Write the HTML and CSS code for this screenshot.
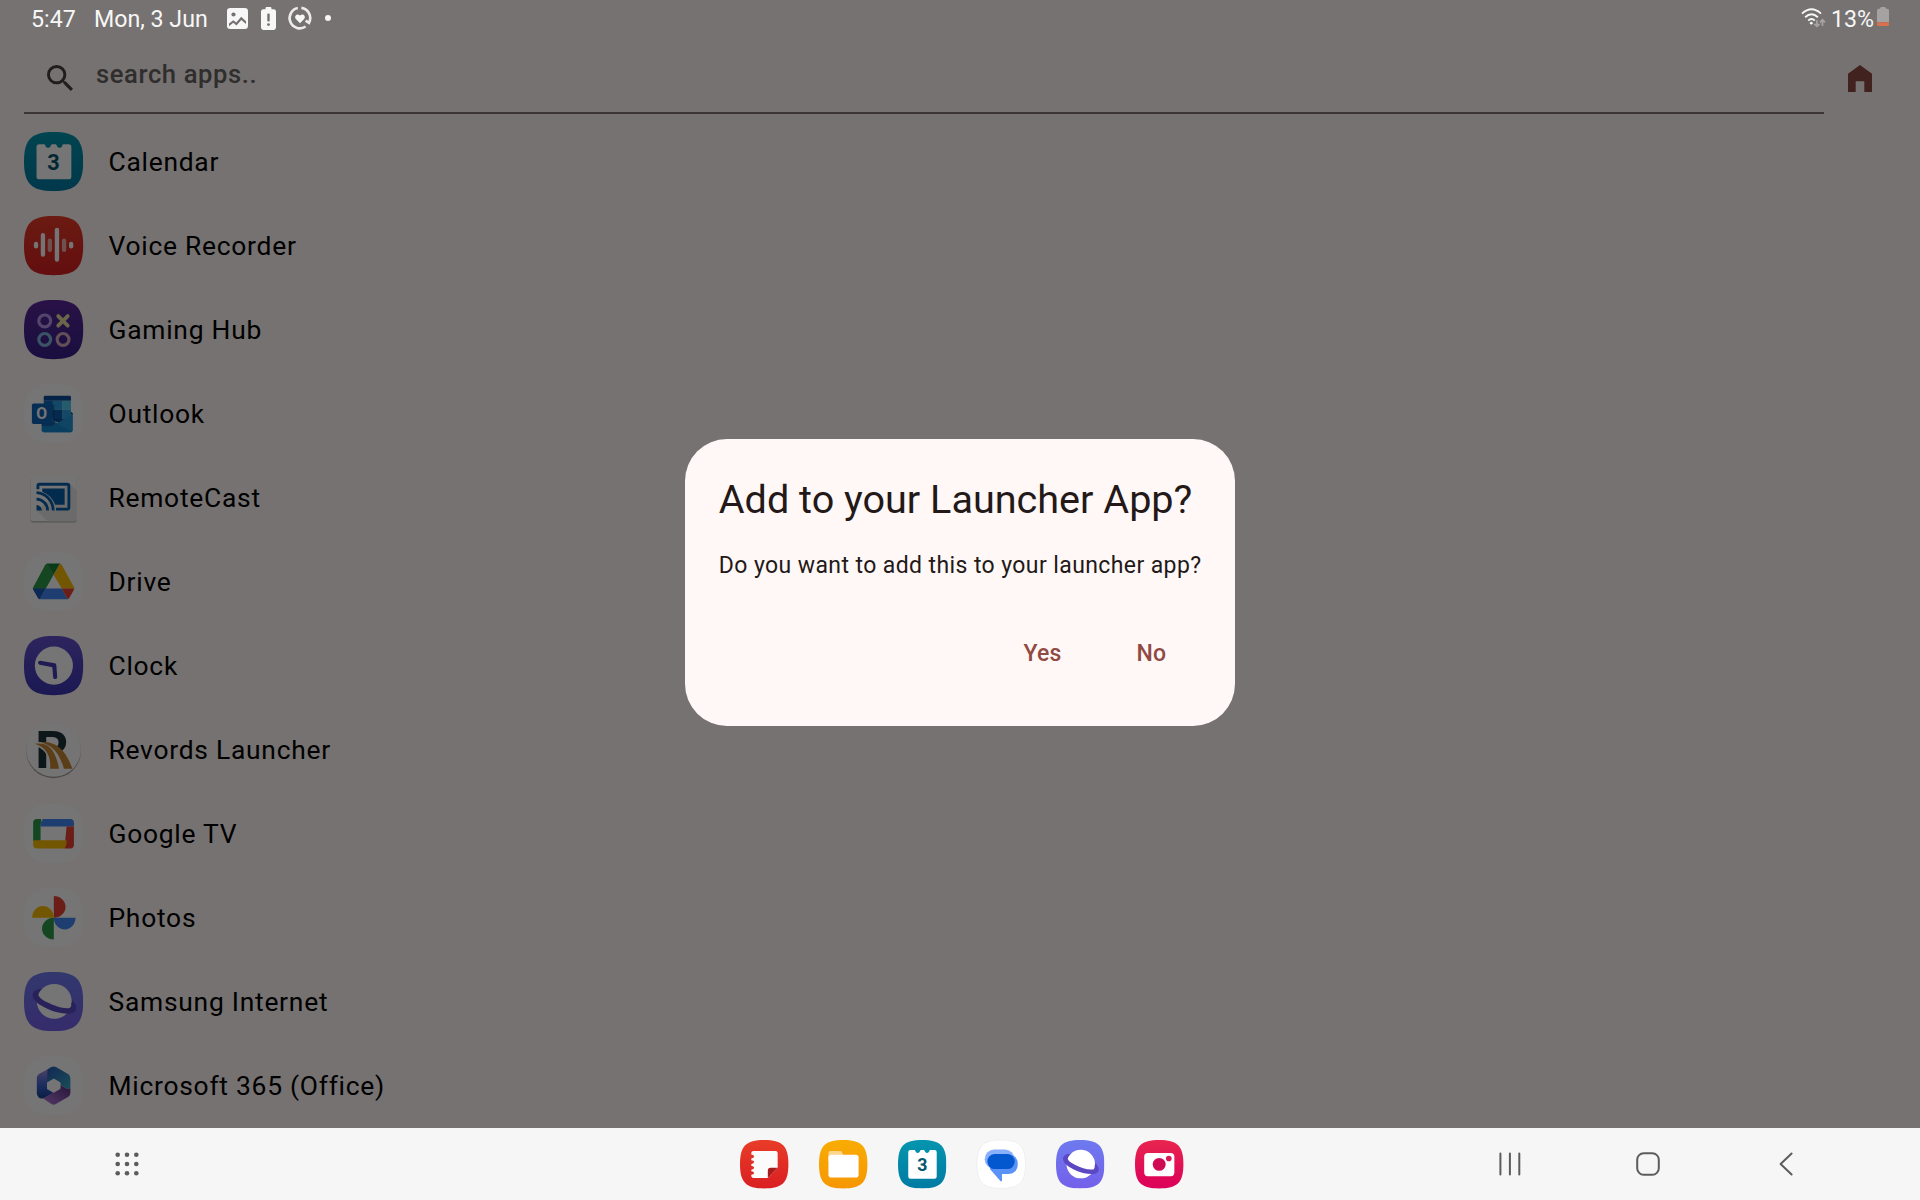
FILE: index.html
```html
<!DOCTYPE html>
<html lang="en">
<head>
<meta charset="utf-8">
<title>Launcher</title>
<link rel="stylesheet" href="styles.css">
</head>
<body>
<svg class="defs" width="0" height="0" aria-hidden="true">
  <defs>
    <linearGradient id="g-teal" x1="0" y1="0" x2="0" y2="1"><stop offset="0" stop-color="#0595ae"/><stop offset="1" stop-color="#007ba3"/></linearGradient>
    <linearGradient id="g-red" x1="0" y1="0" x2="0" y2="1"><stop offset="0" stop-color="#e83c28"/><stop offset="1" stop-color="#da1f22"/></linearGradient>
    <linearGradient id="g-purple" x1="0" y1="0" x2="0" y2="1"><stop offset="0" stop-color="#5a2699"/><stop offset="1" stop-color="#37208a"/></linearGradient>
    <linearGradient id="g-indigo" x1="0" y1="0" x2="0" y2="1"><stop offset="0" stop-color="#6450cc"/><stop offset="1" stop-color="#3a35b4"/></linearGradient>
    <linearGradient id="g-net" x1="0" y1="0" x2="0" y2="1"><stop offset="0" stop-color="#6e7aef"/><stop offset="1" stop-color="#7460ea"/></linearGradient>
    <linearGradient id="g-orange" x1="0" y1="0" x2="0" y2="1"><stop offset="0" stop-color="#f8ac03"/><stop offset="1" stop-color="#f69704"/></linearGradient>
    <linearGradient id="g-pink" x1="0" y1="0" x2="0" y2="1"><stop offset="0" stop-color="#e8254e"/><stop offset="1" stop-color="#dc005a"/></linearGradient>
    <linearGradient id="g-road" x1="0" y1="0" x2="1" y2="1"><stop offset="0" stop-color="#c98a3c"/><stop offset="1" stop-color="#c5842f"/></linearGradient>
    <linearGradient id="g-m1" x1="0" y1="0" x2="1" y2="1"><stop offset="0" stop-color="#2757b8"/><stop offset="1" stop-color="#3aa9c0"/></linearGradient>
    <linearGradient id="g-m2" x1="0" y1="0" x2="0" y2="1"><stop offset="0" stop-color="#a58be0"/><stop offset=".5" stop-color="#3f67d0"/><stop offset="1" stop-color="#173f94"/></linearGradient>
    <linearGradient id="g-m3" x1="0" y1="1" x2="1" y2="0"><stop offset="0" stop-color="#b77ce0"/><stop offset="1" stop-color="#57307f"/></linearGradient>
    <path id="squircle" d="M30 0C52.5 0 60 7.5 60 30S52.5 60 30 60 0 52.5 0 30 7.5 0 30 0Z"/>
    <symbol id="i-calendar" viewBox="0 0 60 60">
      <use href="#squircle" fill="url(#g-teal)"/>
      <path fill="#fff" d="M15.5 12.3H20.7C21.6 12.3 21.6 16 24.5 16S27.2 12.3 28.3 12.3H32.2C33.2 12.3 33.2 16 36.1 16S38.8 12.3 39.7 12.3H45.3Q48 12.3 48 15V45.3Q48 48 45.3 48H15.5Q12.7 48 12.7 45.3V15Q12.7 12.3 15.5 12.3Z"/>
      <text class="icon-day" x="30.3" y="38.3" text-anchor="middle">3</text>
    </symbol>
    <symbol id="i-internet" viewBox="0 0 60 60">
      <use href="#squircle" fill="url(#g-net)"/>
      <ellipse cx="30.7" cy="29.3" rx="23" ry="10" transform="rotate(20 30.7 29.3)" fill="#5b48c2"/>
      <circle cx="30.7" cy="29.8" r="17.7" fill="#fff"/>
      <path fill="#5b48c2" d="M9 22C8 27 13 32 22 36.5 32 41.5 44 43.5 49.5 41.5 52.5 40.3 53.4 37.5 52.5 34L47.8 31C48.8 34 48.3 36 46 36.5 40 37.5 31 34.5 24 31 18 28 14 25 14.5 22Z"/>
    </symbol>
  </defs>
</svg>

<div class="screen">
  <header class="status">
    <div class="status-side">
      <span class="time">5:47</span>
      <span class="date">Mon, 3 Jun</span>
      <svg class="s-image" viewBox="0 0 21 21"><rect width="21" height="21" rx="3.2" fill="#f7f7f7"/><circle cx="6.5" cy="6.5" r="2.1" fill="#757170"/><path fill="#757170" d="M2 15.6L6.3 12.2 9.3 14.4 14.2 8.8 19 13.2V16L14.3 12 9.5 17.6 6.3 14.8 2 18.2Z"/></svg>
      <svg class="s-batt" viewBox="0 0 15 23"><path fill="#f7f7f7" d="M4.5 2.2V1.2Q4.5 0 5.7 0H9.3Q10.5 0 10.5 1.2V2.2H12.6Q15 2.2 15 4.6V20.6Q15 23 12.6 23H2.4Q0 23 0 20.6V4.6Q0 2.2 2.4 2.2Z"/><rect x="6.3" y="6.5" width="2.4" height="8" rx="1" fill="#757170"/><circle cx="7.5" cy="17.6" r="1.4" fill="#757170"/></svg>
      <svg class="s-heart" viewBox="0 0 24 24" fill="none" stroke="#eceaea" stroke-width="2.6"><path d="M9.8 2.1A10.2 10.2 0 1 0 17.6 20.5"/><path d="M13.4 1.9A10.2 10.2 0 0 1 21 16.8L17.6 14.6"/><path fill="#f7f7f7" stroke="none" d="M12 17.3L7.9 13.1C5.6 10.4 9 6.6 12 9.6 15 6.6 18.4 10.4 16.1 13.1Z"/></svg>
      <span class="s-dot"></span>
    </div>
    <div class="status-side">
      <svg class="s-wifi" viewBox="0 0 26 20" fill="none" stroke="#f7f7f7" stroke-width="1.9"><path d="M1 5.6Q10.5-3 20 5.6"/><path d="M4.1 9.2Q10.5 3.4 16.9 9.2"/><path d="M7.2 12.6Q10.5 9.6 13.8 12.6"/><circle cx="10.3" cy="15.2" r="1.4" fill="#f7f7f7" stroke="none"/><path stroke="#a7a4a3" stroke-width="1.7" d="M15.9 12.3V18.2M13.3 15.8L15.9 18.4 18.5 15.8M21.5 18V12M19 14.3L21.5 11.8 24 14.3"/></svg>
      <span class="percent">13%</span>
      <svg class="s-level" viewBox="0 0 12 19"><path fill="#a5a3a2" d="M3 1.7Q3 0 4.5 0H7.5Q9 0 9 1.7H10.4Q12 1.7 12 3.4V15H0V3.4Q0 1.7 1.6 1.7Z"/><path fill="#d9714f" d="M0 15.2H12V17.4Q12 19 10.4 19H1.6Q0 19 0 17.4Z"/></svg>
    </div>
  </header>

  <main class="app">
    <div class="search-row">
      <div class="search-field">
        <svg class="search-icon" viewBox="3 3 17.5 17.5"><path fill="#4a3f3d" d="M15.5 14h-.79l-.28-.27A6.471 6.471 0 0 0 16 9.5 6.5 6.5 0 1 0 9.5 16c1.61 0 3.09-.59 4.23-1.57l.27.28v.79l5 4.99L20.49 19l-4.99-5zm-6 0C7.01 14 5 11.99 5 9.5S7.01 5 9.5 5 14 7.01 14 9.5 11.99 14 9.5 14z"/></svg>
        <span class="placeholder">search apps..</span>
      </div>
      <svg class="home-icon" viewBox="0 0 24 27"><path fill="#904a43" d="M12 0L24 8.8V27H16.3V16.3H7.7V27H0V8.8Z"/></svg>
    </div>
    <ul class="apps">
      <li><svg class="icon"><use href="#i-calendar"/></svg><span>Calendar</span></li>
      <li><svg class="icon" viewBox="0 0 60 60"><use href="#squircle" fill="url(#g-red)"/><g stroke="#fff" stroke-width="4.4" stroke-linecap="round"><path d="M12.2 28.3V30.7M19.2 19.4V39M33.4 14V44.2M47.8 28.3V30.7"/><path stroke-opacity=".62" d="M26.2 25V34.2M40.6 25V34.2"/></g></svg><span>Voice Recorder</span></li>
      <li><svg class="icon" viewBox="0 0 60 60"><use href="#squircle" fill="url(#g-purple)"/><g fill="none" stroke-width="3.2"><circle cx="21" cy="21.2" r="6" stroke="#b39aee"/><path d="M34.7 16.3L44.3 26M44.3 16.3L34.7 26" stroke="#e6dfa2" stroke-width="3.8" stroke-linecap="round"/><circle cx="21" cy="40" r="6" stroke="#7fb6dc"/><circle cx="39.6" cy="40" r="6" stroke="#d8adc0"/></g></svg><span>Gaming Hub</span></li>
      <li><svg class="icon" viewBox="0 0 60 60"><use href="#squircle" fill="#fff"/><path fill="#0a4d9c" d="M21.5 12H46Q47.6 12 47.6 13.5V17H20V13.5Q20 12 21.5 12Z"/><path fill="#0f6cbd" d="M20 17H29.3V35H20Z"/><path fill="#2ba0df" d="M29.3 17H38.6V26H29.3Z"/><path fill="#50c8ee" d="M38.6 17H47.6V26H38.6Z"/><path fill="#0b5cab" d="M29.3 26H38.6V38H29.3Z"/><path fill="#2ba0df" d="M38.6 26H47.6V38H38.6Z"/><path fill="#0a3768" d="M47.6 28.5L49.5 29.6V31H47.6Z"/><path fill="#0a4d9c" d="M29 35.5H40.5L35 39.5Z"/><path fill="#2196d6" d="M49.5 30.3V47Q49.5 48.8 47.7 48.8H20Q18 48.8 18 47V32L34 39.5Z"/><path fill="#1688cd" d="M18 33L48.8 48.2Q48 48.8 47.3 48.8H20Q18 48.8 18 47Z"/><path fill="#083b75" opacity=".45" d="M20 21H31V40Q31 42.5 28.5 42.5H18V40Z"/><rect x="8" y="19.8" width="20.8" height="20.8" rx="1.8" fill="#0f62b5"/><text class="icon-o" x="18.3" y="35.9" text-anchor="middle">O</text></svg><span>Outlook</span></li>
      <li><svg class="icon" viewBox="0 0 60 60"><rect x="6.6" y="8.6" width="47" height="46.6" rx="3" fill="#b9b3b2"/><rect x="6.6" y="7.3" width="47" height="46.6" rx="2.6" fill="#fcfcfc"/><path fill="#eceaea" d="M13 43L24 54H51Q53.6 54 53.6 51.3V23L46 15.5Z"/><path fill="none" stroke="#075fa8" stroke-width="2.9" d="M14.1 21.5V18.2Q14.1 16.5 15.8 16.5H43.8Q45.5 16.5 45.5 18.2V40Q45.5 41.7 43.8 41.7H32.5"/><path fill="#075fa8" d="M18.5 20.9H41.2V37.3H31.6A23 23 0 0 0 18.5 24ZM12.7 37.6A5.4 5.4 0 0 1 18.1 43H12.7Z"/><path fill="none" stroke="#075fa8" stroke-width="2.8" d="M12.7 25A18 18 0 0 1 29.6 43M12.7 31.5A11.5 11.5 0 0 1 23.9 43"/></svg><span>RemoteCast</span></li>
      <li><svg class="icon" viewBox="0 0 60 60"><use href="#squircle" fill="#fff"/><path fill="#2b9a48" d="M24 11.7L30 23 16 48 9 37Q9 36.5 9.4 35.7L21.3 13.5Q22.3 11.7 24 11.7Z"/><path fill="#15803a" d="M23.5 11.7H36.5L30 23Z"/><path fill="#fbbc04" d="M36.5 11.7Q37.8 12.2 38.5 13.5L50.7 35.7 51 37H38.3L30 23Z"/><path fill="#1c57b9" d="M9 37H21.7L15.9 48Q14.7 47.5 13.8 46L9.5 38.4Z"/><path fill="#4285f4" d="M21.7 37H38.3L44.2 48H17Q16.3 48 15.9 47.8Z"/><path fill="#ea4335" d="M38.3 37H51Q50.8 37.9 50.4 38.6L46.2 46Q45.3 47.5 44.2 48Z"/></svg><span>Drive</span></li>
      <li><svg class="icon" viewBox="0 0 60 60"><use href="#squircle" fill="url(#g-indigo)"/><circle cx="30.3" cy="30" r="19.3" fill="#fff"/><path d="M16.3 27.1L30.7 29.8 31.6 41.6" fill="none" stroke="#453db5" stroke-width="4.2" stroke-linecap="round" stroke-linejoin="round"/></svg><span>Clock</span></li>
      <li><svg class="icon" viewBox="0 0 60 60"><circle cx="30" cy="31.2" r="27.8" fill="#a49e9d"/><circle cx="30" cy="29.8" r="27.8" fill="#fdfdfd"/><text class="icon-r" x="11.3" y="49">R</text><path fill="#fdfdfd" d="M10.5 23C25 20 38 28 50 50H26C27 37 20 28 10.5 26Z"/><path fill="url(#g-road)" d="M11 24C26 22 32 31 35.5 49.3H26.5C27.5 37 23 28 11 24ZM17 22.5C32 21 42 30 49 49.3H40.5C35 31 28 26 17 22.5Z"/></svg><span>Revords Launcher</span></li>
      <li><svg class="icon" viewBox="0 0 60 60"><use href="#squircle" fill="#fff"/><path fill="#2b9a48" d="M17.5 15.3H13Q9.3 15.3 9.3 19V37.5H16.8V22.5Z"/><path fill="#4285f4" d="M19.5 15.3H47Q50.6 15.3 50.6 19V22.7H16.8Q16.8 17.5 19.5 15.3Z"/><path fill="#ea4335" d="M43.2 22.7H50.6V41.3Q50.6 45 47 45H41Z"/><path fill="#fbbc04" d="M9.3 36.8H43.2Q43.2 43 41 45H13Q9.3 45 9.3 41.3Z"/></svg><span>Google TV</span></li>
      <li><svg class="icon" viewBox="0 0 60 60"><use href="#squircle" fill="#fff"/><path fill="#ea4335" d="M30.2 8.2A11.9 11 0 0 1 30.2 30.2Z"/><path fill="#fbbc04" d="M8.2 30.2A11 11.9 0 0 1 30.2 30.2Z"/><path fill="#4285f4" d="M30.2 30.2H52.2A11 11.9 0 0 1 30.2 30.2Z"/><path fill="#2b9a48" d="M30.2 30.2V52.2A11.9 11 0 0 1 30.2 30.2Z"/></svg><span>Photos</span></li>
      <li><svg class="icon"><use href="#i-internet"/></svg><span>Samsung Internet</span></li>
      <li><svg class="icon" viewBox="0 0 60 60"><use href="#squircle" fill="#fff"/><path fill="url(#g-m1)" d="M23.5 13.6L27.7 11.2Q30 10 32.4 11.2L45 18.5Q47 20 47 22.5V32Q46 34.5 43 33L37 29.5V27L30.5 23 23 27.5Z"/><path fill="url(#g-m2)" d="M23.5 13.6V32.5L30 37.3 19.5 43Q16 43.5 14.6 41.5 13 40 13 37.5V22.3Q13 19.7 15.2 18.3Z"/><path fill="url(#g-m3)" d="M19.5 43L37 32.7V29.5L43 33Q46 34.5 47 32V37.5Q47 40 45 41.3L32.3 48.6Q30 50 27.7 48.6Z"/><path fill="#fff" d="M30 23L36.7 26.8V33.4L30 37.2 23.3 33.4V26.8Z"/></svg><span>Microsoft 365 (Office)</span></li>
    </ul>
  </main>

  <div class="scrim">
    <section class="dialog" role="dialog">
      <h1>Add to your Launcher App?</h1>
      <p>Do you want to add this to your launcher app?</p>
      <div class="actions"><button>Yes</button><button>No</button></div>
    </section>
  </div>

  <footer class="dock">
    <svg class="drawer" viewBox="0 0 24 24" fill="#5c5c5c"><circle cx="2.7" cy="2.7" r="2.3"/><circle cx="12" cy="2.7" r="2.3"/><circle cx="21.3" cy="2.7" r="2.3"/><circle cx="2.7" cy="12" r="2.3"/><circle cx="12" cy="12" r="2.3"/><circle cx="21.3" cy="12" r="2.3"/><circle cx="2.7" cy="21.3" r="2.3"/><circle cx="12" cy="21.3" r="2.3"/><circle cx="21.3" cy="21.3" r="2.3"/></svg>
    <div class="dock-apps">
      <svg viewBox="0 0 60 60"><use href="#squircle" fill="url(#g-red)"/><path fill="#fbfbfb" d="M17 13.5H44Q46.7 13.5 46.7 16V34.5L34.5 47H17Q14 47 14 44.5V43Q17.5 42.5 17.5 40.8T14 38.7V36.8Q17.5 36 17.5 34.3T14 32V29.8Q17.5 29 17.5 27.2T14 25V23Q17.5 22.2 17.5 20.5T14 18V16Q14 13.5 17 13.5Z"/><path fill="#a81c1c" d="M34.5 47V38Q34.5 34.5 38 34.5H46.7Z"/></svg>
      <svg viewBox="0 0 60 60"><use href="#squircle" fill="url(#g-orange)"/><path fill="#fcd68c" d="M14 13.7H26.5Q28.5 13.7 29 16L29.7 18.5H34V26H11.7V16Q11.7 13.7 14 13.7Z"/><rect x="11.7" y="18.3" width="37.4" height="28.2" rx="3.5" fill="#fff"/></svg>
      <svg><use href="#i-calendar"/></svg>
      <svg viewBox="0 0 60 60"><use href="#squircle" fill="#fff" stroke="#e9e9e9" stroke-width=".8"/><rect x="9.5" y="11.8" width="37" height="24" rx="12" fill="#8ab0fb"/><path fill="#5a92f8" d="M24 18H39Q50.5 18.5 50.5 30T39 42.3H31V50Q31 52.3 29 50.8L16 36Z"/><rect x="12.8" y="17.5" width="34" height="18.6" rx="9.3" fill="#0458cf"/></svg>
      <svg><use href="#i-internet"/></svg>
      <svg viewBox="0 0 60 60"><use href="#squircle" fill="url(#g-pink)"/><rect x="11.4" y="16" width="37.4" height="28.8" rx="4.5" fill="#fff"/><circle cx="30" cy="30.2" r="8" fill="#cf0b53"/><circle cx="41.9" cy="22.9" r="3.5" fill="#dd1751"/></svg>
    </div>
    <div class="nav">
      <svg viewBox="0 0 24 24"><path d="M2.4 1.5V22.5M11.9 1.5V22.5M21.3 1.5V22.5"/></svg>
      <svg viewBox="0 0 24 24"><rect x="1.2" y="1.2" width="21.6" height="21.6" rx="6.5"/></svg>
      <svg viewBox="0 0 24 24"><path d="M17.6 1.5L6.6 12 17.6 22.5"/></svg>
    </div>
  </footer>
</div>
</body>
</html>
```
FILE: styles.css
```css
* { box-sizing: border-box; }
body { margin: 0; font-family: Roboto, "Liberation Sans", sans-serif; }
svg { display: block; flex: none; overflow: visible; }
.defs { position: absolute; }

.screen {
  position: relative;
  width: 1920px;
  height: 1200px;
  overflow: hidden;
  display: flex;
  flex-direction: column;
  background: #fff8f7;
}

/* status bar stays bright above the scrim */
.status {
  position: relative;
  z-index: 2;
  height: 36px;
  padding: 0 31px;
  display: flex;
  justify-content: space-between;
  color: #f7f7f7;
  font-size: 23.2px;
  line-height: 36px;
}
.status-side { display: flex; align-items: center; white-space: nowrap; }
.status span:not(.s-dot) { padding-top: 2px; }
.time { width: 63px; }
.date { width: 133px; }
.s-image { width: 21px; height: 21px; margin-right: 13px; }
.s-batt { width: 15px; height: 23px; margin-right: 12px; }
.s-heart { width: 24px; height: 24px; margin-right: 13px; }
.s-dot { width: 6px; height: 6px; border-radius: 50%; background: #f7f7f7; }
.s-wifi { width: 26px; height: 20px; margin-right: 4px; }
.percent { width: 46px; }
.s-level { width: 12px; height: 19px; margin-top: -3px; }

.app { flex: 1; }
.search-row { display: flex; height: 84px; padding-left: 24px; }
.search-field {
  width: 1800px;
  height: 78px;
  padding: 0 0 0 22.5px;
  display: flex;
  border-bottom: 2px solid #857370;
}
.search-icon { width: 26px; height: 26px; margin: 28.6px 23.5px 0 0; }
.placeholder {
  margin-top: 21px;
  font-size: 25.6px;
  line-height: 34px;
  font-weight: 500;
  letter-spacing: .6px;
  color: #6a6563;
}
.home-icon { width: 24px; height: 27px; margin: 28.6px 0 0 24px; }

.apps { list-style: none; margin: 0; padding: 0; }
.apps li {
  height: 84px;
  padding-left: 24.4px;
  display: flex;
  align-items: center;
  gap: 24.9px;
  font-size: 26.4px;
  letter-spacing: .75px;
  color: #000;
  white-space: nowrap;
}
.icon { width: 59.2px; height: 59.2px; }
.icon-day { font: 700 22px Roboto, sans-serif; fill: #05566f; }
.icon-o { font: 700 16px Roboto, sans-serif; fill: #fff; }
.icon-r { font: 700 53px/1 Roboto, sans-serif; fill: #1e3138; }

.scrim {
  position: absolute;
  inset: 0 0 72px;
  padding-top: 36px;
  display: flex;
  align-items: center;
  justify-content: center;
  background: rgba(0, 0, 0, .54);
}
.dialog {
  width: 550.4px;
  height: 287px;
  padding: 34.5px 34px 0;
  border-radius: 42px;
  background: #fff8f7;
  color: #231918;
  white-space: nowrap;
}
.dialog h1 { margin: 0; font-size: 39.6px; line-height: 54px; font-weight: 400; }
.dialog p { margin: 23px 0 0; font-size: 23px; line-height: 32px; letter-spacing: .4px; }
.actions { display: flex; justify-content: flex-end; margin-top: 39px; gap: 19px; padding-right: 7px; }
.actions button {
  border: 0;
  background: none;
  padding: 16px 28px;
  color: #904a43;
  font: 500 23px/34px Roboto, sans-serif;
  letter-spacing: .15px;
}

.dock {
  height: 72px;
  padding: 0 122.5px 0 115px;
  display: flex;
  align-items: center;
  justify-content: space-between;
  background: #f6f6f6;
}
.drawer { width: 24px; height: 24px; }
.dock-apps { display: flex; gap: 30.6px; margin-left: 601.4px; }
.dock-apps svg { width: 48.4px; height: 48.4px; }
.nav { display: flex; gap: 114px; margin-left: auto; }
.nav svg { width: 24px; height: 24px; fill: none; stroke: #5c5c5c; stroke-width: 2; stroke-linecap: round; stroke-linejoin: round; }
```
